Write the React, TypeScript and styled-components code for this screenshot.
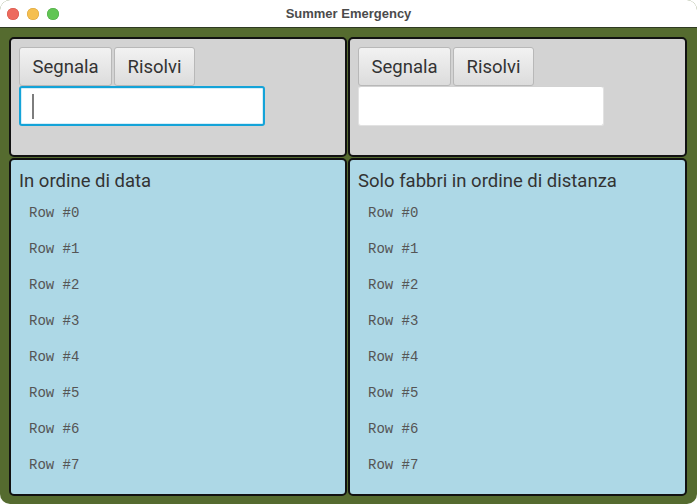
import React from "react";
import styled, { createGlobalStyle } from "styled-components";

const GlobalStyle = createGlobalStyle`
  html, body { margin: 0; padding: 0; background: #ffffff; }
  * { box-sizing: border-box; }
`;

const Window = styled.div`
  width: 697px;
  height: 504px;
  display: flex;
  flex-direction: column;
  border-radius: 10px;
  overflow: hidden;
  background: #556b2f;
`;

const TitleBar = styled.div`
  height: 28px;
  flex: 0 0 28px;
  display: grid;
  grid-template-columns: 1fr auto 1fr;
  align-items: center;
  background: #ffffff;
  border-bottom: 1px solid #2f3a22;
`;

const Lights = styled.div`
  display: flex;
  gap: 8px;
  padding-left: 7px;
`;

const Light = styled.span<{ $c: string; $b: string }>`
  width: 12px;
  height: 12px;
  border-radius: 50%;
  background: ${(p) => p.$c};
  box-shadow: inset 0 0 0 0.5px ${(p) => p.$b};
`;

const Title = styled.div`
  font-family: "Liberation Sans", Arial, sans-serif;
  font-weight: 700;
  font-size: 13px;
  color: #4b4b4b;
`;

const Content = styled.div`
  flex: 1;
  padding: 9px 10px 8px 9px;
  display: grid;
  grid-template-columns: 338px 339px;
  grid-template-rows: 120px 338px;
  gap: 1px;
`;

const TopPanel = styled.div`
  background: #d3d3d3;
  border: 2px solid #111111;
  border-radius: 5px;
  padding: 8px;
  display: flex;
  flex-direction: column;
  align-items: flex-start;
`;

const ButtonRow = styled.div`
  display: flex;
  gap: 2px;
`;

const Button = styled.button`
  height: 39px;
  padding: 0 12.5px;
  font-family: Roboto, "Liberation Sans", sans-serif;
  font-size: 18.5px;
  color: #333333;
  background: linear-gradient(#f2f2f2, #dcdcdc);
  border: 1px solid #b8b8b8;
  border-radius: 3px;
`;

const TextField = styled.div<{ $focused?: boolean }>`
  width: 246px;
  height: 40px;
  display: flex;
  align-items: center;
  padding-left: 11px;
  background: #ffffff;
  border-radius: 3px;
  border: ${(p) => (p.$focused ? "2px solid #14a3d8" : "1px solid #e2e2e2")};
  border-top-color: ${(p) => (p.$focused ? "#14a3d8" : "#d2d2d2")};
  box-shadow: ${(p) => (p.$focused ? "inset 0 0 0 1px #d6eef8" : "none")};
`;

const Caret = styled.span`
  width: 2px;
  height: 25px;
  background: #7d7d7d;
`;

const ListPanel = styled.div`
  background: #add8e6;
  border: 2px solid #111111;
  border-radius: 5px;
  padding: 7px 8px 8px;
  display: flex;
  flex-direction: column;
`;

const PanelTitle = styled.div`
  font-family: Roboto, "Liberation Sans", sans-serif;
  font-size: 18.5px;
  line-height: 28px;
  color: #333333;
`;

const List = styled.div`
  display: flex;
  flex-direction: column;
`;

const Row = styled.div`
  height: 36px;
  display: flex;
  align-items: center;
  padding-left: 10px;
  font-family: "Liberation Mono", "Courier New", monospace;
  font-size: 14px;
  color: #555555;
`;

const rows = [0, 1, 2, 3, 4, 5, 6, 7];

function Controls({ focused }: { focused?: boolean }) {
  return (
    <TopPanel>
      <ButtonRow>
        <Button>Segnala</Button>
        <Button>Risolvi</Button>
      </ButtonRow>
      <TextField $focused={focused}>{focused && <Caret />}</TextField>
    </TopPanel>
  );
}

function ListBox({ title }: { title: string }) {
  return (
    <ListPanel>
      <PanelTitle>{title}</PanelTitle>
      <List>
        {rows.map((r) => (
          <Row key={r}>Row #{r}</Row>
        ))}
      </List>
    </ListPanel>
  );
}

export default function App() {
  return (
    <>
      <GlobalStyle />
      <Window>
        <TitleBar>
          <Lights>
            <Light $c="#ed6a5e" $b="#d35548" />
            <Light $c="#f5bf4f" $b="#d9a23b" />
            <Light $c="#61c554" $b="#4ea845" />
          </Lights>
          <Title>Summer Emergency</Title>
          <div />
        </TitleBar>
        <Content>
          <Controls focused />
          <Controls />
          <ListBox title="In ordine di data" />
          <ListBox title="Solo fabbri in ordine di distanza" />
        </Content>
      </Window>
    </>
  );
}
